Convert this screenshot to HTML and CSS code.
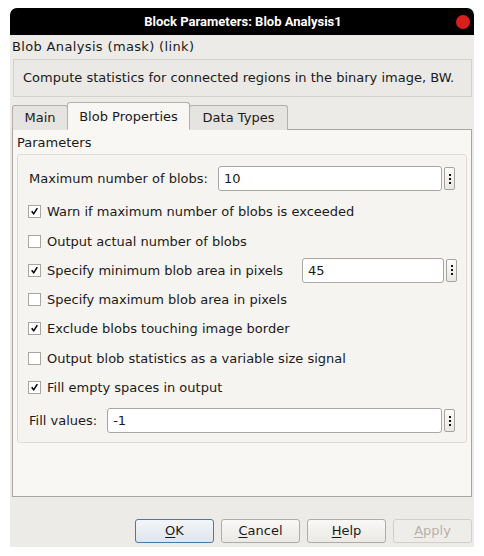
FILE: index.html
```html
<!DOCTYPE html>
<html>
<head>
<meta charset="utf-8">
<link rel="stylesheet" href="styles.css">
</head>
<body>
<div class="window">
  <div class="titlebar">
    <span class="title">Block Parameters: Blob Analysis1</span>
    <span class="close"></span>
  </div>
  <div class="content">
    <div class="masklabel">Blob Analysis (mask) (link)</div>
    <div class="desc">Compute statistics for connected regions in the binary image, BW.</div>
    <div class="tabs">
      <div class="tab">Main</div>
      <div class="tab active">Blob Properties</div>
      <div class="tab">Data Types</div>
    </div>
    <div class="panel">
      <div class="paramtitle">Parameters</div>
      <div class="group">
        <div class="row field">
          <span class="label">Maximum number of blobs:</span>
          <span class="input">10</span>
          <span class="more"><i></i><i></i><i></i></span>
        </div>
        <div class="row check">
          <span class="cb on"><svg viewBox="0 0 13 13"><path d="M2.4 6.8 L4.0 5.6 L5.5 7.8 L9.1 2.2 L10.6 3.1 L5.7 10.6 Z" /></svg></span>
          <span>Warn if maximum number of blobs is exceeded</span>
        </div>
        <div class="row check">
          <span class="cb"></span>
          <span>Output actual number of blobs</span>
        </div>
        <div class="row check">
          <span class="cb on"><svg viewBox="0 0 13 13"><path d="M2.4 6.8 L4.0 5.6 L5.5 7.8 L9.1 2.2 L10.6 3.1 L5.7 10.6 Z" /></svg></span>
          <span class="label grow">Specify minimum blob area in pixels</span>
          <span class="input small">45</span>
          <span class="more"><i></i><i></i><i></i></span>
        </div>
        <div class="row check">
          <span class="cb"></span>
          <span>Specify maximum blob area in pixels</span>
        </div>
        <div class="row check">
          <span class="cb on"><svg viewBox="0 0 13 13"><path d="M2.4 6.8 L4.0 5.6 L5.5 7.8 L9.1 2.2 L10.6 3.1 L5.7 10.6 Z" /></svg></span>
          <span>Exclude blobs touching image border</span>
        </div>
        <div class="row check">
          <span class="cb"></span>
          <span>Output blob statistics as a variable size signal</span>
        </div>
        <div class="row check">
          <span class="cb on"><svg viewBox="0 0 13 13"><path d="M2.4 6.8 L4.0 5.6 L5.5 7.8 L9.1 2.2 L10.6 3.1 L5.7 10.6 Z" /></svg></span>
          <span>Fill empty spaces in output</span>
        </div>
        <div class="row field">
          <span class="label">Fill values:</span>
          <span class="input">-1</span>
          <span class="more"><i></i><i></i><i></i></span>
        </div>
      </div>
    </div>
    <div class="buttons">
      <div class="btn default"><u>O</u>K</div>
      <div class="btn"><u>C</u>ancel</div>
      <div class="btn"><u>H</u>elp</div>
      <div class="btn disabled"><u>A</u>pply</div>
    </div>
  </div>
</div>
</body>
</html>
```
FILE: styles.css
```css
* { box-sizing: border-box; }
html, body { margin: 0; padding: 0; background: #ffffff; }
body { font-family: "DejaVu Sans", sans-serif; font-size: 13px; color: #1a1a1a; }

.window {
  margin: 8px 10px 0 10px;
  width: 464px;
  height: 539px;
  background: #edebe7;
  border-radius: 7px 7px 0 0;
  overflow: hidden;
  display: flex;
  flex-direction: column;
}
.titlebar {
  height: 27px;
  background: #000000;
  color: #ffffff;
  position: relative;
  display: flex;
  align-items: center;
  justify-content: center;
  font-family: "Roboto", "DejaVu Sans", sans-serif;
  font-weight: bold;
  font-size: 13px;
  padding-left: 2px;
}
.close {
  position: absolute;
  right: 4px;
  top: 7px;
  width: 14px;
  height: 14px;
  border-radius: 50%;
  background: #d91e1e;
}
.content {
  flex: 1;
  display: flex;
  flex-direction: column;
  padding: 0 2px;
}
.masklabel {
  font-size: 13px;
  letter-spacing: 0.35px;
  height: 24px;
  line-height: 23px;
}
.desc {
  font-size: 13px;
  margin: 0 0 0 1px;
  height: 38px;
  line-height: 36px;
  border: 1px solid #d4d1cc;
  background: #ebe9e5;
  padding-left: 9px;
}
.tabs {
  display: flex;
  align-items: flex-end;
  height: 33px;
  position: relative;
  z-index: 1;
  margin-bottom: -1px;
}
.tab {
  height: 25px;
  line-height: 23px;
  border: 1px solid #b3b0ab;
  border-bottom: none;
  border-radius: 3px 3px 0 0;
  background: #e6e4e0;
  margin-right: -1px;
  text-align: center;
}
.tab:first-child { width: 56px; }
.tab.active {
  height: 28px;
  line-height: 27px;
  background: #f9f7f4;
  width: 123px;
  position: relative;
  z-index: 2;
  border-bottom: 1px solid #f9f7f4;
}
.tab:last-child { width: 99px; }
.panel {
  height: 368px;
  width: 460px;
  border: 1px solid #a8a5a0;
  background: #f9f7f4;
  padding: 0 4px;
  display: flex;
  flex-direction: column;
}
.paramtitle {
  height: 24px;
  line-height: 24px;
  padding-top: 1px;
}
.group {
  width: 450px;
  height: 289px;
  border: 1px solid #dedbd6;
  border-radius: 3px;
  background: #f6f4f1;
  padding: 11px 11px 0 10px;
  display: flex;
  flex-direction: column;
  gap: 12.3px;
}
.row {
  display: flex;
  align-items: center;
  height: 17px;
  flex: 0 0 auto;
}
.row.field { height: 25px; }
.label { margin-right: 10px; padding-left: 1px; }
.label.grow { flex: 1; padding-left: 0; }
.input {
  flex: 1;
  height: 25px;
  background: #ffffff;
  border: 1px solid #aaa7a2;
  border-radius: 3px;
  padding-left: 5px;
  line-height: 23px;
}
.input.small { flex: 0 0 142px; }
.more {
  width: 11px;
  height: 23px;
  margin-left: 2px;
  border: 1px solid #a8a5a0;
  border-radius: 2px;
  background: linear-gradient(#fbfbfa, #e9e7e4);
  display: flex;
  flex-direction: column;
  align-items: center;
  justify-content: center;
  gap: 2px;
  flex: 0 0 11px;
}
.row.check .more { margin-right: -2px; }
.more i {
  display: block;
  width: 2px;
  height: 2px;
  background: #111;
}
.cb {
  width: 13px;
  height: 13px;
  border: 1px solid #a9a6a1;
  background: #ffffff;
  margin-right: 6px;
  flex: 0 0 13px;
  display: flex;
}
.cb svg { width: 11px; height: 11px; }
.cb path { fill: #000; stroke: none; }
.buttons {
  display: flex;
  justify-content: flex-end;
  gap: 7px;
  margin-top: 22px;
}
.btn {
  width: 79px;
  height: 24px;
  line-height: 22px;
  text-align: center;
  border: 1px solid #b0ada8;
  border-radius: 3px;
  background: linear-gradient(#f9f8f6, #ebe9e6);
}
.btn u { text-decoration: underline; text-underline-offset: 2px; }
.btn.default {
  border-color: #3f7cb0;
  background: linear-gradient(#f3f6f9, #dfe5ec);
}
.btn.disabled { color: #b3b1ae; border-color: #d2cfcb; background: #efedea; }
```
